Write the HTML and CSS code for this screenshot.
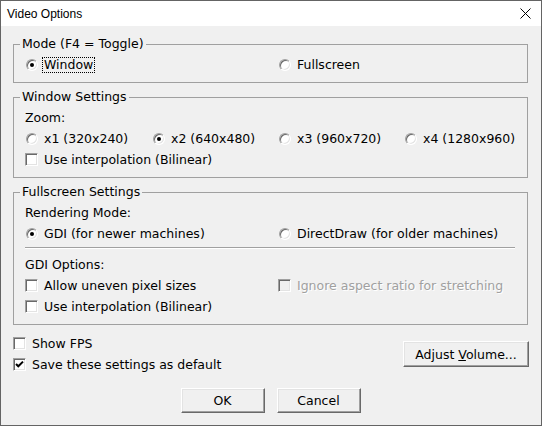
FILE: index.html
```html
<!DOCTYPE html>
<html>
<head>
  <title>Video Options</title>
  <link rel="stylesheet" href="styles.css">
</head>
<body>
  <div class="dialog">
    <div class="titlebar">
      <span class="title">Video Options</span>
      <svg class="close" width="11" height="11" viewBox="0 0 11 11">
        <path d="M0.5 0.5 L10.5 10.5 M10.5 0.5 L0.5 10.5" stroke="#000" stroke-width="1" fill="none"/>
      </svg>
    </div>

    <div class="content">
      <div class="group">
        <div class="group-title">Mode (F4 = Toggle)</div>
        <div class="grid">
          <label class="opt"><span class="radio on"></span><span class="focus">Window</span></label>
          <label class="opt col3"><span class="radio"></span>Fullscreen</label>
        </div>
      </div>

      <div class="group">
        <div class="group-title">Window Settings</div>
        <div class="line">Zoom:</div>
        <div class="grid">
          <label class="opt"><span class="radio"></span>x1 (320x240)</label>
          <label class="opt"><span class="radio on"></span>x2 (640x480)</label>
          <label class="opt"><span class="radio"></span>x3 (960x720)</label>
          <label class="opt"><span class="radio"></span>x4 (1280x960)</label>
        </div>
        <label class="opt"><span class="check"></span>Use interpolation (Bilinear)</label>
      </div>

      <div class="group">
        <div class="group-title">Fullscreen Settings</div>
        <div class="line">Rendering Mode:</div>
        <div class="grid">
          <label class="opt"><span class="radio on"></span>GDI (for newer machines)</label>
          <label class="opt col3"><span class="radio"></span>DirectDraw (for older machines)</label>
        </div>
        <div class="separator"></div>
        <div class="line">GDI Options:</div>
        <div class="grid">
          <label class="opt"><span class="check"></span>Allow uneven pixel sizes</label>
          <label class="opt col3 disabled"><span class="check"></span>Ignore aspect ratio for stretching</label>
        </div>
        <label class="opt"><span class="check"></span>Use interpolation (Bilinear)</label>
      </div>

      <div class="footer">
        <div class="footer-checks">
          <label class="opt"><span class="check"></span>Show FPS</label>
          <label class="opt">
            <span class="check">
              <svg width="9" height="9" viewBox="0 0 9 9"><path d="M1 4 L3.3 6.3 L8 1.6" stroke="#000" stroke-width="2" fill="none"/></svg>
            </span>
            Save these settings as default
          </label>
        </div>
        <button class="btn btn-volume">Adjust <u>V</u>olume...</button>
      </div>

      <div class="actions">
        <button class="btn">OK</button>
        <button class="btn">Cancel</button>
      </div>
    </div>
  </div>
</body>
</html>
```

FILE: styles.css
```css
* {
  box-sizing: border-box;
}

body {
  margin: 0;
  background-color: #f0f0f0;
  font-family: "DejaVu Sans", sans-serif;
  font-size: 12.5px;
  color: #000;
}

.dialog {
  width: 542px;
  height: 426px;
  border: 1px solid #646464;
  background-color: #f0f0f0;
  display: flex;
  flex-direction: column;
}

.titlebar {
  height: 25px;
  flex-shrink: 0;
  background-color: #fff;
  display: flex;
  align-items: center;
  justify-content: space-between;
  padding: 0 10px 0 6px;
}

.title {
  font-family: "Liberation Sans", sans-serif;
  font-size: 12px;
}

.content {
  padding: 18px 13px 0 12px;
}

/* group boxes */
.group {
  border: 1px solid #a0a0a0;
  padding: 0 12px 7px 11px;
}

.group + .group {
  margin-top: 14px;
}

.group-title {
  width: fit-content;
  height: 16px;
  line-height: 16px;
  margin: -9px 0 2px -5px;
  padding: 0 2px;
  background-color: #f0f0f0;
}

.grid {
  display: grid;
  grid-template-columns: 127px 126px 126px 1fr;
}

.col3 {
  grid-column: 3;
}

.line,
.opt {
  height: 21px;
  display: flex;
  align-items: center;
  white-space: nowrap;
}

.opt {
  gap: 6px;
}

.separator {
  margin: 3px 0 5px;
  border-top: 1px solid #a0a0a0;
  border-bottom: 1px solid #fff;
}

/* radio buttons and check boxes, sunken */
.radio,
.check {
  flex-shrink: 0;
  background-color: #fff;
  border: 1px solid;
  border-color: #a0a0a0 #fff #fff #a0a0a0;
  box-shadow: inset 1px 1px 0 #696969, inset -1px -1px 0 #e3e3e3;
}

.radio {
  width: 12px;
  height: 12px;
  margin-left: 1px;
  border-radius: 50%;
  display: flex;
  align-items: center;
  justify-content: center;
}

.radio.on::after {
  content: "";
  width: 4px;
  height: 4px;
  border-radius: 50%;
  background-color: #000;
}

.check {
  width: 13px;
  height: 13px;
  padding: 1px;
  display: flex;
}

.focus {
  margin-left: -1px;
  padding: 0 1px;
  line-height: 14px;
  outline: 1px dotted #000;
}

.disabled {
  color: #a0a0a0;
  text-shadow: 1px 1px 0 #fff;
}

.disabled .check {
  background-color: #f0f0f0;
}

/* bottom part */
.footer {
  margin-top: 8px;
  margin-right: -1px;
  display: flex;
  justify-content: space-between;
  align-items: flex-start;
}

.actions {
  margin-top: 13px;
  display: flex;
  justify-content: center;
  gap: 12px;
}

.btn {
  width: 84px;
  height: 25px;
  padding: 0;
  font-family: inherit;
  font-size: inherit;
  color: #000;
  background-color: #f0f0f0;
  border: 1px solid;
  border-color: #fff #696969 #696969 #fff;
  box-shadow: inset -1px -1px 0 #a0a0a0, inset 1px 1px 0 #e3e3e3;
}

.btn-volume {
  width: 126px;
  height: 26px;
  margin-top: 8px;
}
```
